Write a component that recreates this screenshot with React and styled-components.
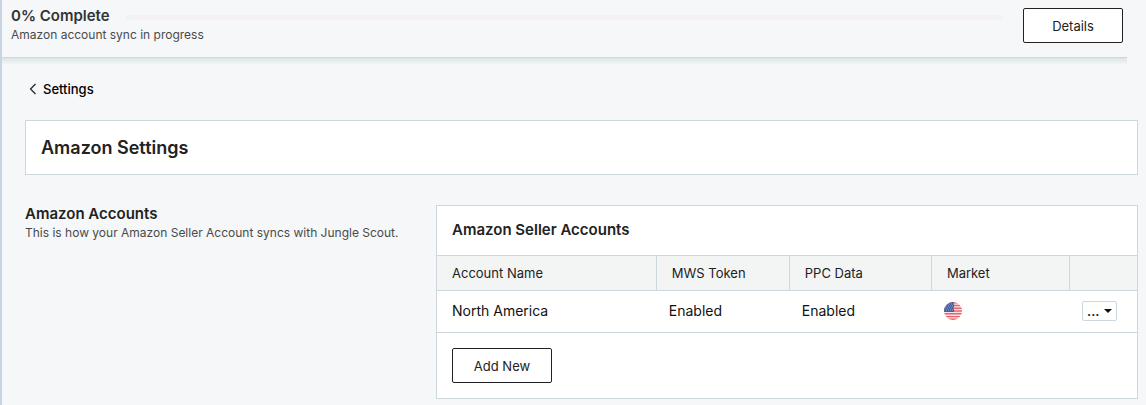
import React from "react";
import styled, { createGlobalStyle } from "styled-components";

const colors = {
	page: "#f5f7f9",
	panel: "#ffffff",
	headRow: "#f3f5f5",
	border: "#cdd8dd",
	edge: "#c8d3e6",
	track: "#f3f1f2",
	text: "#222222",
	textMuted: "#4a4a4a",
};

const GlobalStyle = createGlobalStyle`
	*, *::before, *::after {
		box-sizing: border-box;
	}

	body {
		margin: 0;
		background-color: ${colors.page};
		color: ${colors.text};
		font-family: Inter, "Open Sans", sans-serif;
		font-size: 13px;
		line-height: 20px;
	}

	h1, h2, h3, p {
		margin: 0;
	}
`;

const Page = styled.div`
	min-height: 100vh;
	border-left: 2px solid ${colors.edge};
	background-color: ${colors.page};
`;

const SyncBar = styled.header`
	display: flex;
	align-items: flex-start;
	justify-content: space-between;
	height: 58px;
	margin-right: 19px;
	padding: 8px 4px 0 9px;
	border-bottom: 1px solid ${colors.border};
`;

const SyncShadow = styled.div`
	height: 7px;
	margin-right: 19px;
	background: linear-gradient(#dde4e7, ${colors.page});
`;

const SyncStatus = styled.div`
	display: flex;
	flex: 1;
	flex-direction: column;
	gap: 1px;
	margin-right: 20px;
`;

const SyncLine = styled.div`
	display: flex;
	align-items: center;
	gap: 16px;
	height: 16px;
`;

const SyncTitle = styled.h2`
	font-size: 15px;
	font-weight: 600;
	line-height: 16px;
	color: #333333;
`;

const Track = styled.div`
	flex: 1;
	height: 5px;
	margin-top: 3px;
	background-color: ${colors.track};
`;

const Note = styled.p`
	font-size: 12px;
	color: ${colors.textMuted};
`;

const Button = styled.button`
	width: 100px;
	height: 35px;
	padding: 0;
	border: 1px solid ${colors.text};
	border-radius: 2px;
	background-color: ${colors.panel};
	color: ${colors.text};
	font: inherit;
	cursor: pointer;
`;

const Content = styled.main`
	padding: 14px 8px 6px 23px;
`;

const BackLink = styled.a`
	display: inline-flex;
	align-items: center;
	gap: 6px;
	margin-left: 4px;
	color: #000000;
	font-weight: 500;
	text-decoration: none;
`;

const Panel = styled.section`
	border: 1px solid ${colors.border};
	background-color: ${colors.panel};
`;

const TitlePanel = styled(Panel)`
	margin: 20px 0 30px;
	padding: 15px;
`;

const PageTitle = styled.h1`
	font-size: 18px;
	font-weight: 600;
	line-height: 23px;
`;

const Columns = styled.div`
	display: grid;
	grid-template-columns: 411fr 702fr;
`;

const SectionTitle = styled.h2`
	font-size: 15px;
	font-weight: 600;
	line-height: 18px;
`;

const PanelHead = styled.div`
	padding: 15px 15px 16px;
`;

const Table = styled.table`
	width: 100%;
	table-layout: fixed;
	border-collapse: separate;
	border-spacing: 0;
`;

const HeadCell = styled.th`
	width: ${({ $width }) => $width};
	height: 36px;
	padding: 0 15px;
	border: solid ${colors.border};
	border-width: 1px 1px 1px 0;
	background-color: ${colors.headRow};
	font-weight: 400;
	text-align: left;

	&:last-child {
		border-right: 0;
	}
`;

const Cell = styled.td`
	height: 42px;
	padding: 0 12px 2px;
	border-bottom: 1px solid ${colors.border};
	color: #111111;
	font-size: 14px;

	&:first-child {
		padding-left: 15px;
	}

	svg {
		display: block;
	}
`;

const MenuButton = styled.button`
	display: flex;
	align-items: center;
	justify-content: center;
	gap: 4px;
	width: 35px;
	height: 20px;
	padding: 0;
	border: 1px solid ${colors.border};
	border-radius: 2px;
	background-color: ${colors.panel};
	color: ${colors.text};
	font: inherit;
	font-size: 13px;
	font-weight: 600;
	line-height: 18px;
	cursor: pointer;
`;

const PanelFoot = styled.div`
	padding: 15px;
`;

const ChevronLeft = () => (
	<svg width="8" height="12" viewBox="0 0 8 12" fill="none" aria-hidden="true">
		<path d="M6.5 1 1.5 6l5 5" stroke="#222222" strokeWidth="1.2" />
	</svg>
);

const Caret = () => (
	<svg width="8" height="4" viewBox="0 0 8 4" aria-hidden="true">
		<path d="M0 0h8L4 4z" fill="#111111" />
	</svg>
);

const UsFlag = () => (
	<svg width="18" height="18" viewBox="0 0 18 18" role="img" aria-label="United States">
		<clipPath id="flag-round">
			<circle cx="9" cy="9" r="9" />
		</clipPath>
		<g clipPath="url(#flag-round)">
			<rect width="18" height="18" fill="#fbe3e4" />
			<path
				d="M0 .7h18M0 3.5h18M0 6.3h18M0 9h18M0 11.8h18M0 14.6h18M0 17.3h18"
				stroke="#e8636a"
				strokeWidth="1.4"
			/>
			<rect width="10" height="10" fill="#4960a5" />
			<path
				d="M1 2h9M2 4h8M1 6h9M2 8h8"
				stroke="#8c9bc9"
				strokeWidth="1"
				strokeDasharray="1 1"
			/>
		</g>
	</svg>
);

const columns = [
	{ label: "Account Name", width: "31.4%" },
	{ label: "MWS Token", width: "19%" },
	{ label: "PPC Data", width: "20.3%" },
	{ label: "Market", width: "19.7%" },
];

const accounts = [{ name: "North America", mws: "Enabled", ppc: "Enabled" }];

const App = () => {
	return (
		<>
			<GlobalStyle />
			<Page>
				<SyncBar>
					<SyncStatus>
						<SyncLine>
							<SyncTitle>0% Complete</SyncTitle>
							<Track role="progressbar" aria-valuenow={0} aria-label="Account sync" />
						</SyncLine>
						<Note>Amazon account sync in progress</Note>
					</SyncStatus>
					<Button type="button">Details</Button>
				</SyncBar>
				<SyncShadow />
				<Content>
					<BackLink href="#settings">
						<ChevronLeft />
						Settings
					</BackLink>
					<TitlePanel>
						<PageTitle>Amazon Settings</PageTitle>
					</TitlePanel>
					<Columns>
						<div>
							<SectionTitle>Amazon Accounts</SectionTitle>
							<Note>This is how your Amazon Seller Account syncs with Jungle Scout.</Note>
						</div>
						<Panel>
							<PanelHead>
								<SectionTitle as="h3">Amazon Seller Accounts</SectionTitle>
							</PanelHead>
							<Table>
								<thead>
									<tr>
										{columns.map(({ label, width }) => (
											<HeadCell key={label} $width={width} scope="col">
												{label}
											</HeadCell>
										))}
										<HeadCell scope="col" aria-label="Actions" />
									</tr>
								</thead>
								<tbody>
									{accounts.map(({ name, mws, ppc }) => (
										<tr key={name}>
											<Cell>{name}</Cell>
											<Cell>{mws}</Cell>
											<Cell>{ppc}</Cell>
											<Cell>
												<UsFlag />
											</Cell>
											<Cell>
												<MenuButton type="button" aria-haspopup="menu">
													...
													<Caret />
												</MenuButton>
											</Cell>
										</tr>
									))}
								</tbody>
							</Table>
							<PanelFoot>
								<Button type="button">Add New</Button>
							</PanelFoot>
						</Panel>
					</Columns>
				</Content>
			</Page>
		</>
	);
};

export default App;
